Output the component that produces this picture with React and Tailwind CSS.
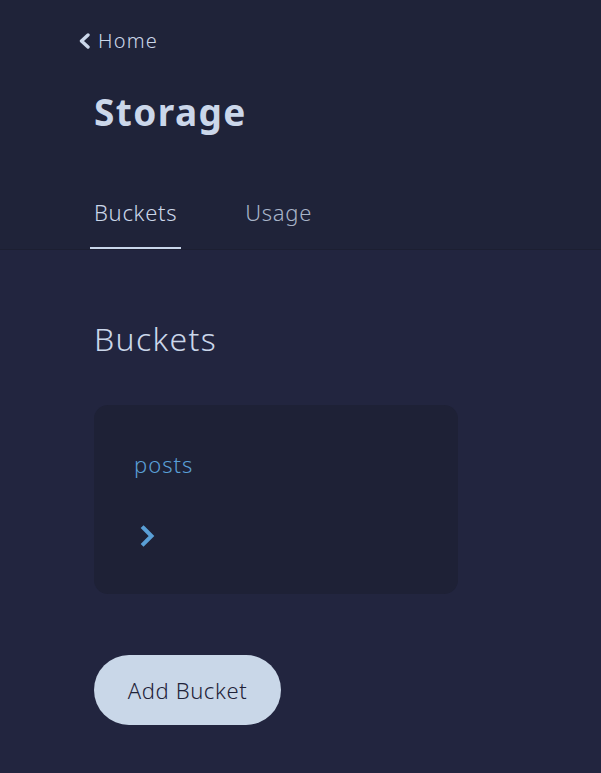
import React from 'react';

const tabs = ['Buckets', 'Usage'];

function BackChevron() {
  return (
    <svg width="13" height="16" viewBox="0 0 13 16" fill="none">
      <polyline points="10,2 3.5,8 10,14" stroke="#cbd7ea" strokeWidth="3.4" strokeLinecap="round" strokeLinejoin="round" />
    </svg>
  );
}

function NextChevron() {
  return (
    <svg width="16" height="22" viewBox="0 0 16 22" fill="none">
      <polyline points="3.5,3 11.5,11 3.5,19" stroke="#5a9fd6" strokeWidth="4" strokeLinecap="square" strokeLinejoin="miter" />
    </svg>
  );
}

export default function App() {
  return (
    <div className="min-h-screen bg-[#22253f] text-[#cbd7ea]" style={{ fontFamily: '"Noto Sans", sans-serif' }}>
      {/* header */}
      <header className="bg-[#1f2339] border-b border-[#1c1f32]">
        <div className="px-[94px] pt-[27px]">
          <a href="#" className="-ml-[16px] flex items-center gap-[7px] text-[20px] leading-[28px] font-light tracking-[1.2px] w-fit">
            <BackChevron />
            <span>Home</span>
          </a>
          <h1 className="mt-[35px] text-[37px] leading-[44px] font-bold tracking-[1.4px]">Storage</h1>
          <nav className="mt-[63px] -ml-[4px] flex gap-[60px]">
            {tabs.map((t, i) => (
              <button
                key={t}
                className={
                  i === 0
                    ? 'px-[4px] pb-[20px] text-[22px] leading-[30px] font-light tracking-[0.7px] border-b-2 border-[#c9d6ea] text-[#cbd7ea]'
                    : 'px-[4px] pb-[20px] text-[22px] leading-[30px] font-light tracking-[0.7px] border-b-2 border-transparent text-[#a8b4c8]'
                }
              >
                {t}
              </button>
            ))}
          </nav>
        </div>
      </header>

      {/* content */}
      <main className="px-[94px] pt-[69px] pb-10">
        <h2 className="text-[32px] leading-[40px] font-light tracking-[1.3px]">Buckets</h2>

        <div className="mt-[46px] w-[364px] h-[189px] rounded-[14px] bg-[#1e2136] pl-[40px] pt-[44px]">
          <a href="#" className="block text-[22px] leading-[30px] font-light tracking-[1px] text-[#5a9fd6]">posts</a>
          <div className="mt-[46px] ml-[6px]">
            <NextChevron />
          </div>
        </div>

        <button className="mt-[61px] w-[187px] h-[70px] rounded-full bg-[#c9d7e8] text-[#1f2339] text-[22px] font-light tracking-[0.6px]">
          Add Bucket
        </button>
      </main>
    </div>
  );
}
